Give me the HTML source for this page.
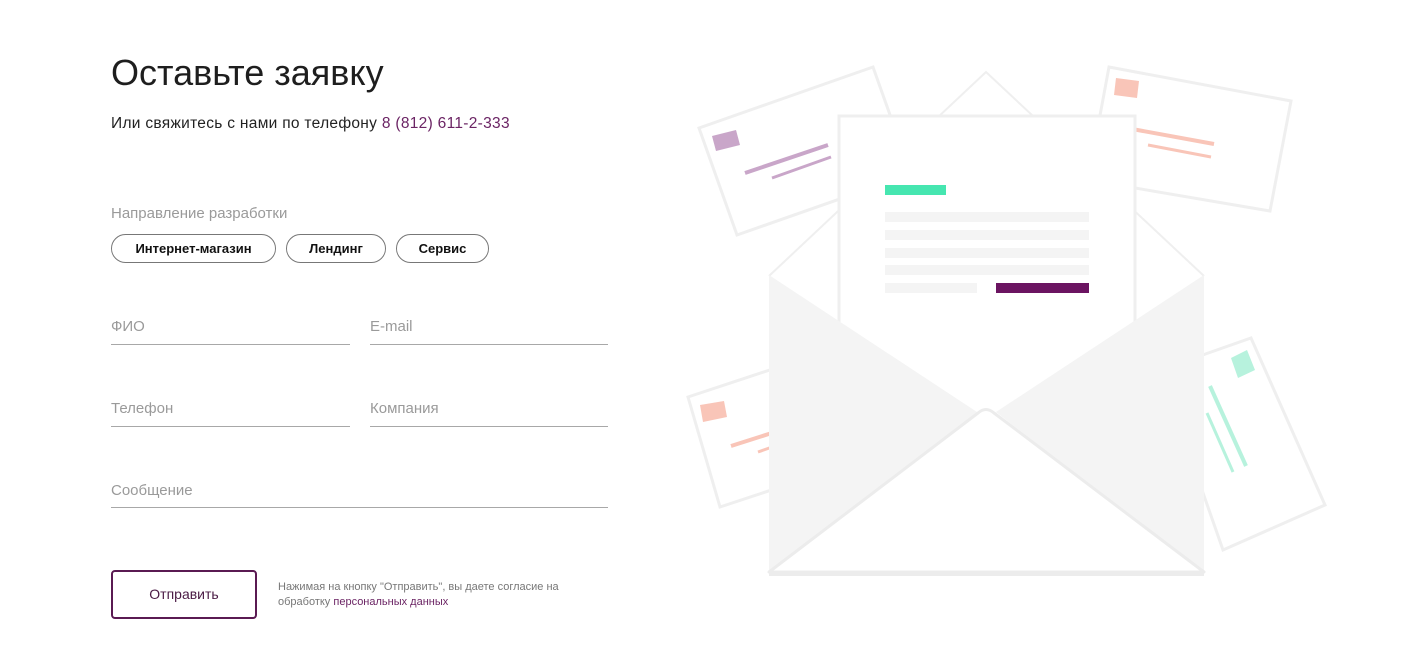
<!DOCTYPE html>
<html><head><meta charset="utf-8"><style>
html,body{margin:0;padding:0;background:#fff;width:1412px;height:652px;overflow:hidden;position:relative;font-family:"Liberation Sans","DejaVu Sans",sans-serif}
.a{position:absolute;white-space:nowrap}
h1{position:absolute;left:111px;top:52px;margin:0;font-size:36px;font-weight:normal;color:#1e1e1e;letter-spacing:0}
.sub{left:111px;top:115px;font-size:15.5px;color:#222;letter-spacing:0.3px}
.sub span{color:#6b2464}
.lab{font-size:15px;color:#9a9a9a}
.pill{position:absolute;top:234px;height:27px;border:1px solid #777;border-radius:15px;font-size:13px;font-weight:bold;color:#111;text-align:center;line-height:27px;box-sizing:content-box}
.line{position:absolute;height:1px;background:#a8a8a8}
.btn{position:absolute;left:111px;top:570px;width:142px;height:45px;border:2px solid #5a1a52;border-radius:4px;text-align:center;line-height:45px;font-size:14px;color:#4a1a44}
.note{left:278px;top:580px;font-size:11px;color:#777;line-height:15px}
.note span{color:#6b2464}
svg{position:absolute;left:0;top:0}
</style></head><body>
<h1>Оставьте заявку</h1>
<div class="a sub">Или свяжитесь с нами по телефону <span>8 (812) 611-2-333</span></div>
<div class="a lab" style="left:111px;top:205px">Направление разработки</div>
<div class="pill" style="left:111px;width:163px">Интернет-магазин</div>
<div class="pill" style="left:286px;width:98px">Лендинг</div>
<div class="pill" style="left:396px;width:91px">Сервис</div>
<div class="a lab" style="left:111px;top:318px">ФИО</div>
<div class="line" style="left:111px;top:344px;width:239px"></div>
<div class="a lab" style="left:370px;top:318px">E-mail</div>
<div class="line" style="left:370px;top:344px;width:238px"></div>
<div class="a lab" style="left:111px;top:400px">Телефон</div>
<div class="line" style="left:111px;top:426px;width:239px"></div>
<div class="a lab" style="left:370px;top:400px">Компания</div>
<div class="line" style="left:370px;top:426px;width:238px"></div>
<div class="a lab" style="left:111px;top:482px">Сообщение</div>
<div class="line" style="left:111px;top:507px;width:497px"></div>
<div class="btn">Отправить</div>
<div class="a note">Нажимая на кнопку "Отправить", вы даете согласие на<br>обработку <span>персональных данных</span></div>

<svg width="1412" height="652" viewBox="0 0 1412 652">
 <polygon points="699,128 873,67 911,174 737,235" fill="#fff" stroke="#efefef" stroke-width="3"/>
 <polygon points="712,136 736,130 740,145 716,151" fill="#c9a6c9"/>
 <line x1="745" y1="173" x2="828" y2="145" stroke="#c9a6c9" stroke-width="4"/>
 <line x1="772" y1="178" x2="831" y2="157" stroke="#c9a6c9" stroke-width="3"/>
 <polygon points="1109,67 1291,101 1270,211 1088,180" fill="#fff" stroke="#efefef" stroke-width="3"/>
 <polygon points="1116,78 1139,81 1137,98 1114,95" fill="#f9c5b8"/>
 <line x1="1132" y1="129" x2="1214" y2="144" stroke="#f9c5b8" stroke-width="4"/>
 <line x1="1148" y1="145" x2="1211" y2="157" stroke="#f9c5b8" stroke-width="3"/>
 <polygon points="688,397 800,360 832,470 720,507" fill="#fff" stroke="#efefef" stroke-width="3"/>
 <polygon points="700,405 724,401 727,417 703,422" fill="#f9c5b8"/>
 <line x1="731" y1="446" x2="775" y2="432" stroke="#f9c5b8" stroke-width="4"/>
 <line x1="758" y1="452" x2="775" y2="446" stroke="#f9c5b8" stroke-width="3"/>
 <polygon points="1160,370 1251,338 1325,505 1223,550" fill="#fff" stroke="#efefef" stroke-width="3"/>
 <polygon points="1231,358 1247,350 1255,370 1238,378" fill="#b7f2dd"/>
 <line x1="1210" y1="386" x2="1246" y2="466" stroke="#b7f2dd" stroke-width="4"/>
 <line x1="1207" y1="413" x2="1233" y2="472" stroke="#b7f2dd" stroke-width="3"/>
 <rect x="769" y="275" width="435" height="300" fill="#fff"/>
 <polygon points="769,276 986,72 1204,276" fill="#fff"/>
 <polyline points="769,276 986,72 1204,276" fill="none" stroke="#efefef" stroke-width="2"/>
 <rect x="839" y="116" width="296" height="320" fill="#fff" stroke="#efefef" stroke-width="3"/>
 <rect x="885" y="185" width="61" height="10" fill="#46e6b0"/>
 <rect x="885" y="212" width="204" height="10" fill="#f4f4f4"/>
 <rect x="885" y="230" width="204" height="10" fill="#f4f4f4"/>
 <rect x="885" y="248" width="204" height="10" fill="#f4f4f4"/>
 <rect x="885" y="265" width="204" height="10" fill="#f4f4f4"/>
 <rect x="885" y="283" width="92" height="10" fill="#f4f4f4"/>
 <rect x="996" y="283" width="93" height="10" fill="#6b1461"/>
 <polygon points="769,275 977,412 769,575" fill="#f4f4f4"/>
 <polygon points="1204,275 996,412 1204,575" fill="#f4f4f4"/>
 <rect x="769" y="570" width="435" height="6" fill="#ececec"/>
 <path d="M769,572 L978,413 Q986,406 994,413 L1204,572 Z" fill="#fff" stroke="#ececec" stroke-width="3" stroke-linejoin="round"/>
</svg>
</body></html>
